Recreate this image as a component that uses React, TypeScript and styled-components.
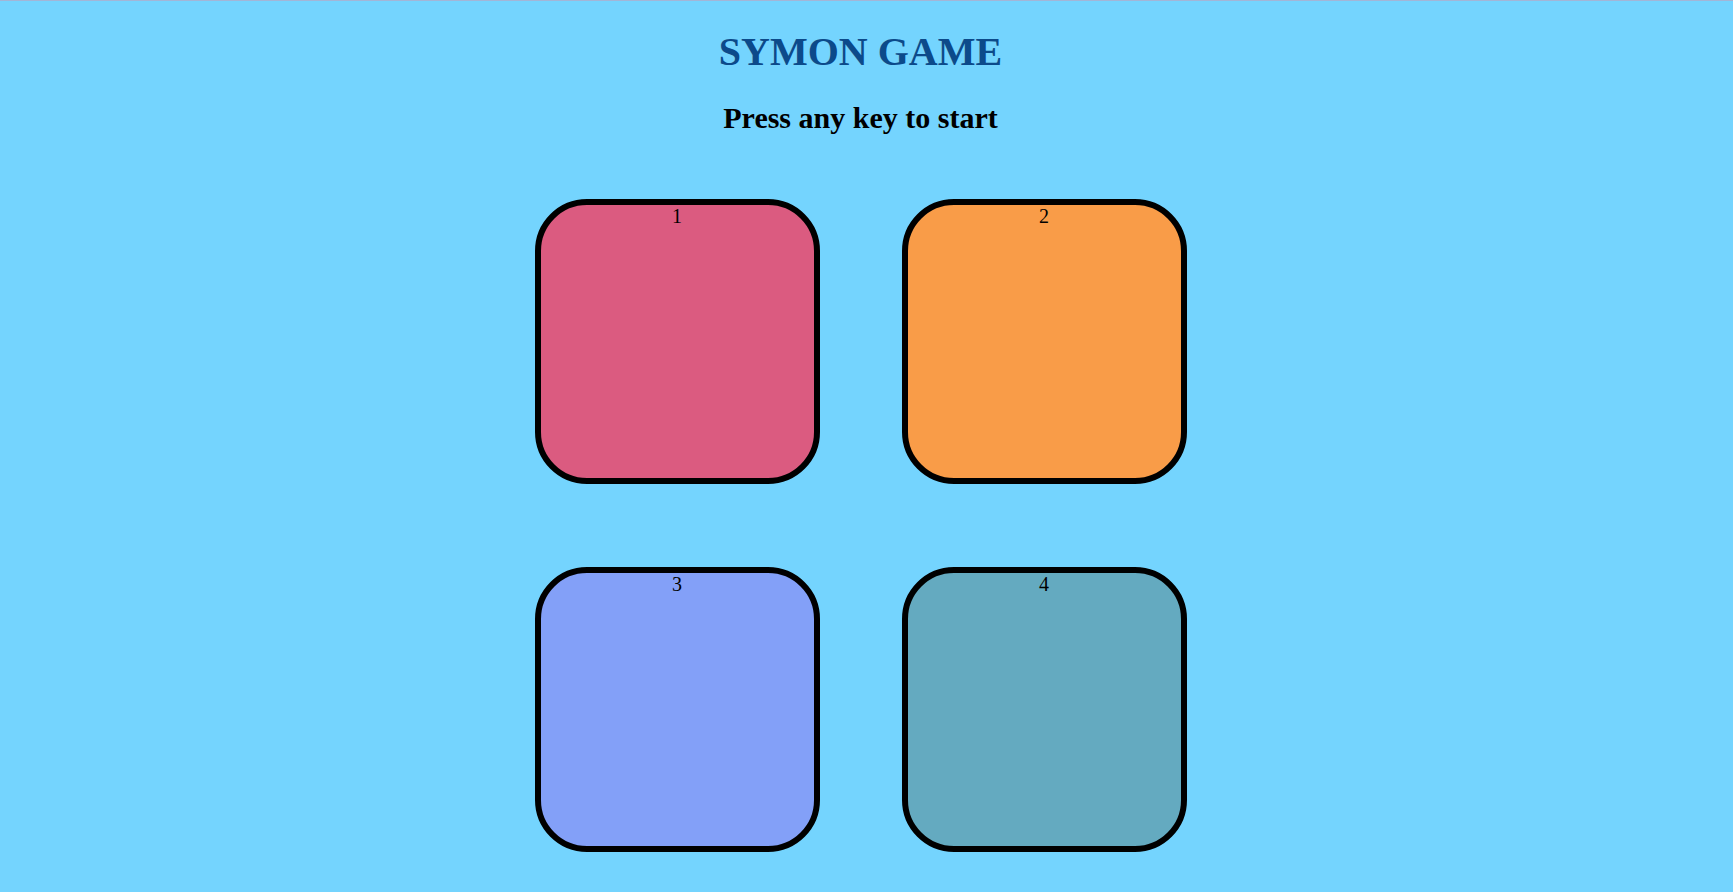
import React from "react";
import styled, { createGlobalStyle } from "styled-components";

const GlobalStyle = createGlobalStyle`
  html, body {
    margin: 0;
    padding: 0;
  }
  body {
    background-color: #74d4fe;
    border-top: 1px solid #a3b5d6;
    min-height: 891px;
    font-family: "Liberation Serif", "Times New Roman", serif;
  }
`;

const Page = styled.div`
  display: flex;
  flex-direction: column;
  align-items: center;
  padding-right: 12px;
`;

const Title = styled.h1`
  margin: 27px 0 0;
  font-size: 40px;
  font-weight: bold;
  line-height: normal;
  color: #0c4a8a;
`;

const Subtitle = styled.h2`
  margin: 26px 0 0;
  font-size: 30px;
  font-weight: bold;
  line-height: normal;
  color: #000;
`;

const Board = styled.div`
  display: grid;
  grid-template-columns: repeat(2, 285px);
  grid-auto-rows: 285px;
  column-gap: 82px;
  row-gap: 83px;
  margin-top: 64px;
`;

const Pad = styled.div<{ $color: string }>`
  box-sizing: border-box;
  background-color: ${(p) => p.$color};
  border: 6px solid #000;
  border-radius: 52px;
  text-align: center;
  font-size: 20px;
  line-height: normal;
  color: #000;
  cursor: pointer;
`;

const pads = [
  { id: 1, color: "#db5b80" },
  { id: 2, color: "#f99c48" },
  { id: 3, color: "#83a0f8" },
  { id: 4, color: "#64aac0" },
];

export default function App() {
  return (
    <>
      <GlobalStyle />
      <Page>
        <Title>SYMON GAME</Title>
        <Subtitle>Press any key to start</Subtitle>
        <Board>
          {pads.map((p) => (
            <Pad key={p.id} $color={p.color}>
              {p.id}
            </Pad>
          ))}
        </Board>
      </Page>
    </>
  );
}
